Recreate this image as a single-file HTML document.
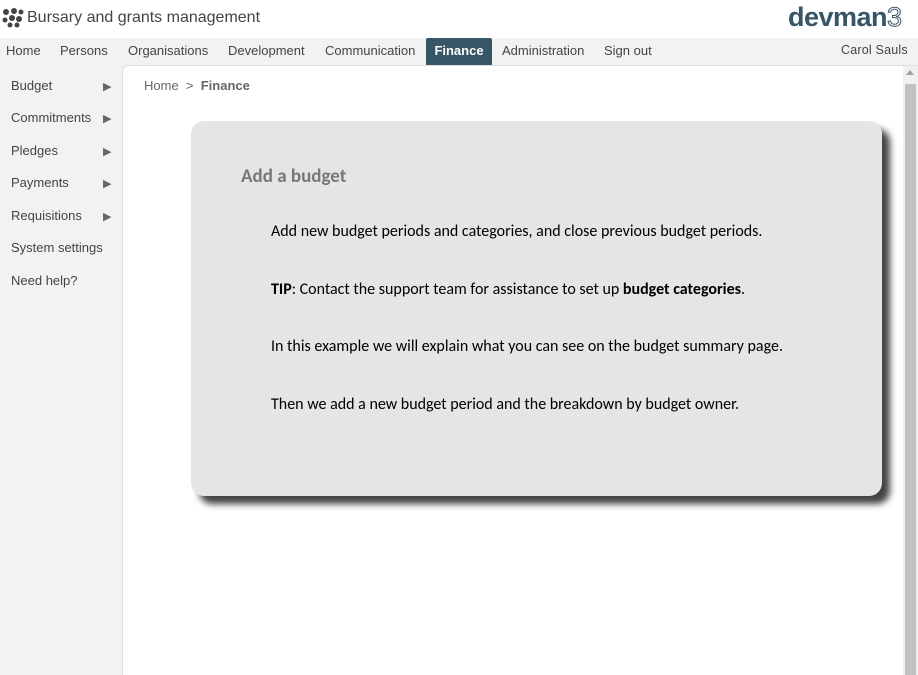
<!DOCTYPE html>
<html><head><style>
*{margin:0;padding:0;box-sizing:border-box}
body{width:918px;height:675px;overflow:hidden;background:#f2f2f2;font-family:"Liberation Sans",Arial,sans-serif;position:relative}
.top{position:absolute;left:0;top:0;width:918px;height:38px;background:#fff}
.title{position:absolute;left:27px;top:9px;font-size:16px;color:#444}
.logo{position:absolute;left:788px;top:2px;font-size:27px;font-weight:bold;color:#365566;letter-spacing:-0.5px}
.logo span{color:#fff;-webkit-text-stroke:1px #365566;font-weight:normal}
.nav{position:absolute;top:38px;left:0;width:918px;height:27px;background:#f2f2f2}
.nav a{position:absolute;top:5px;font-size:13px;color:#444}
.nav .act{top:0;height:27px;width:66px;text-align:center;background:#365566;color:#fff;padding:5px 0;border-radius:2px 2px 0 0;font-weight:bold}
.side a{position:absolute;left:11px;font-size:13px;color:#444}
.side b{position:absolute;left:103px;font-size:11px;color:#666;font-weight:normal}
.main{position:absolute;left:122px;top:65px;width:796px;height:610px;background:#fff;border-left:1px solid #ddd;border-top:1px solid #ddd;border-top-left-radius:6px}
.sb{position:absolute;left:903px;top:66px;width:15px;height:609px;background:#f0f0f0}
.thumb{position:absolute;left:905px;top:84px;width:11px;height:591px;background:#c1c1c1}
.card{position:absolute;left:191px;top:121px;width:691px;height:375px;background:#e5e5e5;border-radius:13px;box-shadow:8px 8px 7px #444;font-family:"Carlito","Liberation Sans",sans-serif}
.card h2{position:absolute;left:50px;top:44px;font-size:19px;color:#777}
.card p{position:absolute;left:80px;font-size:16px;color:#000;white-space:nowrap}
</style></head><body>
<div class="top">
<svg style="position:absolute;left:2px;top:8px" width="22" height="20" viewBox="0 0 22 20"><g fill="#444"><circle cx="4" cy="4" r="3"/><circle cx="12" cy="3" r="3"/><circle cx="19" cy="4" r="2.5"/><circle cx="3" cy="12" r="2.5"/><circle cx="10" cy="10" r="3"/><circle cx="17" cy="11" r="3"/><circle cx="8" cy="17" r="2.5"/><circle cx="15" cy="17" r="2.5"/></g></svg>
<div class="title">Bursary and grants management</div>
<div class="logo">devman<span>3</span></div>
</div>
<div class="nav">
<a style="left:6px">Home</a><a style="left:60px">Persons</a><a style="left:128px">Organisations</a><a style="left:228px">Development</a><a style="left:325px">Communication</a><a class="act" style="left:426px">Finance</a><a style="left:502px">Administration</a><a style="left:604px">Sign out</a><a style="left:841px;font-size:12.5px;letter-spacing:0.2px">Carol Sauls</a>
</div>
<div class="side">
<a style="top:78px">Budget</a><b style="top:80px">▶</b>
<a style="top:110px">Commitments</a><b style="top:112px">▶</b>
<a style="top:143px">Pledges</a><b style="top:145px">▶</b>
<a style="top:175px">Payments</a><b style="top:177px">▶</b>
<a style="top:208px">Requisitions</a><b style="top:210px">▶</b>
<a style="top:240px">System settings</a>
<a style="top:273px">Need help?</a>
</div>
<div class="main"></div>
<div style="position:absolute;left:144px;top:78px;font-size:13px;color:#666">Home &nbsp;&gt;&nbsp; <b>Finance</b></div>
<div class="sb"></div><div class="thumb"></div>
<div style="position:absolute;left:906px;top:70px;width:0;height:0;border-left:4px solid transparent;border-right:4px solid transparent;border-bottom:5px solid #a3a3a3"></div>
<div class="card">
<h2>Add a budget</h2>
<p style="top:101px">Add new budget periods and categories, and close previous budget periods.</p>
<p style="top:159px"><b>TIP</b>: Contact the support team for assistance to set up <b>budget categories</b>.</p>
<p style="top:216px">In this example we will explain what you can see on the budget summary page.</p>
<p style="top:274px">Then we add a new budget period and the breakdown by budget owner.</p>
</div>
</body></html>
